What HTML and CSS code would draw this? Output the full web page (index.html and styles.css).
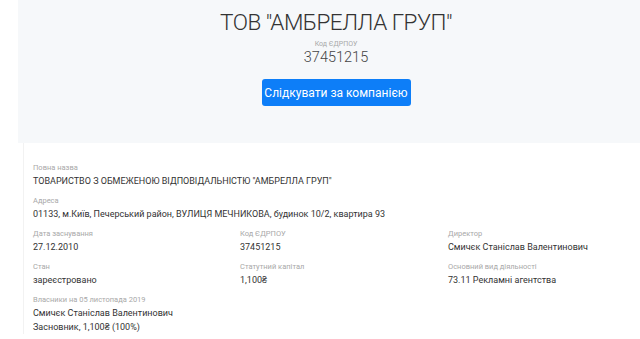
FILE: index.html
```html
<!DOCTYPE html>
<html lang="uk">
<head>
    <meta charset="UTF-8" />
    <title>ТОВ "АМБРЕЛЛА ГРУП"</title>
    <link rel="stylesheet" href="styles.css">
</head>
<body>
    <div class="header">
        <h1>ТОВ "АМБРЕЛЛА ГРУП"</h1>
        <div class="code-label">Код ЄДРПОУ</div>
        <div class="code">37451215</div>
        <button class="follow-button">Слідкувати за компанією</button>
    </div>

    <div class="details">
        <div class="field">
            <div class="label">Повна назва</div>
            <div class="value">ТОВАРИСТВО З ОБМЕЖЕНОЮ ВІДПОВІДАЛЬНІСТЮ "АМБРЕЛЛА ГРУП"</div>
        </div>
        <div class="field">
            <div class="label">Адреса</div>
            <div class="value">01133, м.Київ, Печерський район, ВУЛИЦЯ МЕЧНИКОВА, будинок 10/2, квартира 93</div>
        </div>
        <div class="row">
            <div class="field">
                <div class="label">Дата заснування</div>
                <div class="value">27.12.2010</div>
            </div>
            <div class="field">
                <div class="label">Код ЄДРПОУ</div>
                <div class="value">37451215</div>
            </div>
            <div class="field">
                <div class="label">Директор</div>
                <div class="value">Смичєк Станіслав Валентинович</div>
            </div>
        </div>
        <div class="row">
            <div class="field">
                <div class="label">Стан</div>
                <div class="value">зареєстровано</div>
            </div>
            <div class="field">
                <div class="label">Статутний капітал</div>
                <div class="value">1,100₴</div>
            </div>
            <div class="field">
                <div class="label">Основний вид діяльності</div>
                <div class="value">73.11 Рекламні агентства</div>
            </div>
        </div>
        <div class="field">
            <div class="label">Власники на 05 листопада 2019</div>
            <div class="value">Смичєк Станіслав Валентинович</div>
            <div class="value">Засновник, 1,100₴ (100%)</div>
        </div>
    </div>
</body>
</html>
```

FILE: styles.css
```css
body {
    font-family: "Roboto", "Open Sans", sans-serif;
    background-color: #ffffff;
    margin: 0;
    padding: 0 0 0 18px;
    color: #333333;
}

.header {
    background-color: #f6f8fa;
    text-align: center;
    padding: 8px 0 0 14px;
    height: 135px;
}

h1 {
    font-size: 22.5px;
    font-weight: 300;
    letter-spacing: -0.5px;
    color: #333333;
    margin: 0;
    line-height: 28px;
}

.code-label {
    font-size: 7px;
    color: #a8a8a8;
    margin-top: 3px;
    line-height: 10px;
}

.code {
    font-size: 14.5px;
    font-weight: 300;
    color: #444444;
    line-height: 17px;
}

.follow-button {
    margin-top: 13px;
    background-color: #0d7ef8;
    color: #ffffff;
    border: none;
    border-radius: 3px;
    font-family: "Roboto", "Open Sans", sans-serif;
    font-size: 12px;
    width: 149px;
    height: 27px;
    padding: 0;
}

.details {
    border-left: 1px solid #f2f2f2;
    margin-left: 5px;
    padding: 19px 0 0 9px;
}

.row {
    display: grid;
    grid-template-columns: 207px 208px 1fr;
}

.field {
    margin-bottom: 7px;
}

.label {
    font-size: 7.5px;
    color: #a8a8a8;
    line-height: 12px;
}

.value {
    font-size: 9px;
    color: #333333;
    line-height: 14px;
}
```
